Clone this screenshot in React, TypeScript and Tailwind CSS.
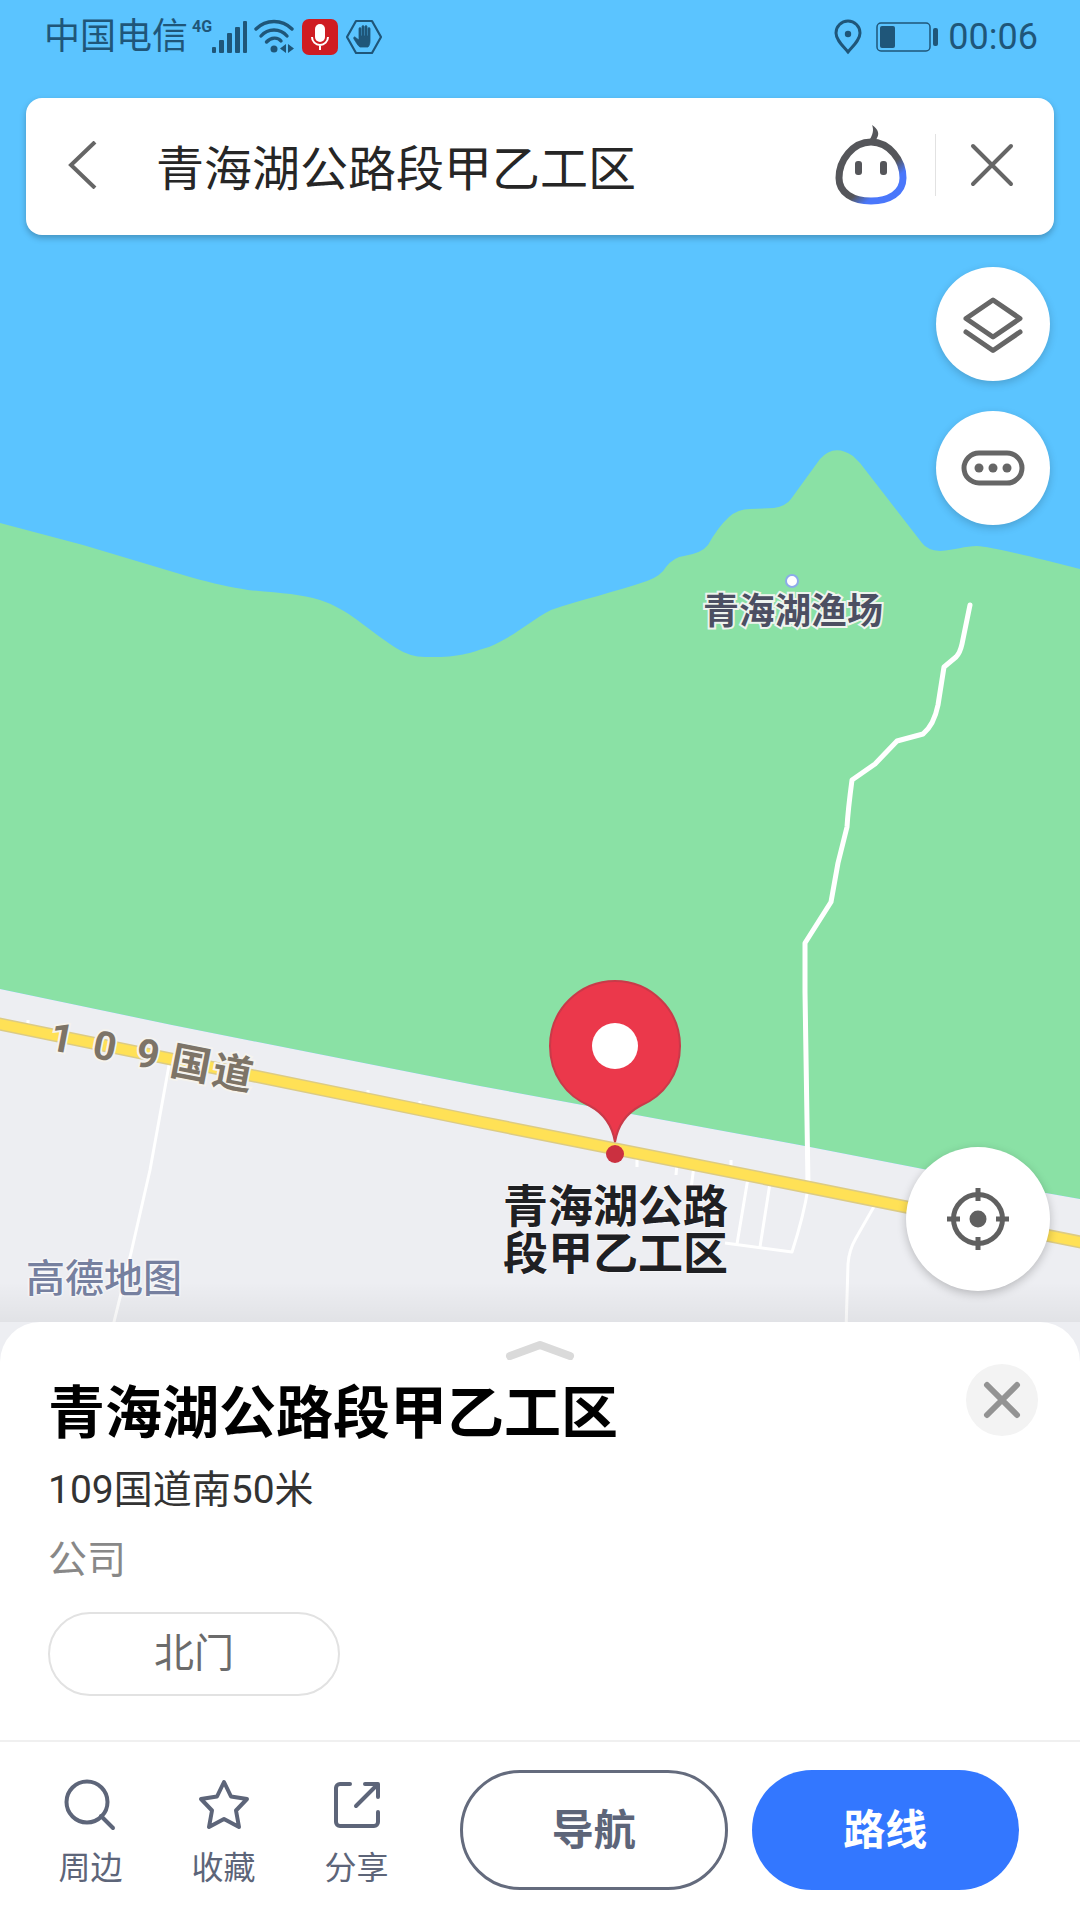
import React, { useState } from 'react';

const PLACE_NAME = '青海湖公路段甲乙工区';

const roadLabel = [
  { char: '1', x: 62, y: 1037 },
  { char: '0', x: 105, y: 1045 },
  { char: '9', x: 148, y: 1053 },
  { char: '国', x: 191, y: 1063 },
  { char: '道', x: 233, y: 1072 }
];

const StatusBar: React.FC = () => (
  <div className="relative flex h-[74px] items-center justify-between pr-[42px] pl-11 text-4xl text-[#1f5679]">
    <div className="flex items-center">
      <span>中国电信</span>
      <span className="ml-1 self-start text-base leading-5 font-bold">4G</span>
      <svg className="h-9 w-9" viewBox="0 0 36 36" fill="currentColor" aria-hidden="true">
        <rect x="0" y="28" width="4" height="6" rx="1" />
        <rect x="7" y="21" width="5" height="13" rx="1" />
        <rect x="15" y="14" width="5" height="20" rx="1" />
        <rect x="23" y="8" width="5" height="26" rx="1" />
        <rect x="31" y="2" width="4" height="32" rx="1" />
      </svg>
      <svg className="ml-1.5 h-9 w-10" viewBox="0 0 40 36" fill="none" stroke="currentColor" strokeWidth="3.4" strokeLinecap="round" aria-hidden="true">
        <path d="M2 10C12 0 28 0 38 10" />
        <path d="M7 17C14 9 26 9 33 17" />
        <path d="M12.500 23C17 18 24 18 27 22" />
        <circle cx="20" cy="30" r="3.500" fill="currentColor" stroke="none" />
        <path d="M32 25v9l-6-4.500zM34 25v9l6-4.500z" fill="currentColor" stroke="none" />
      </svg>
      <svg className="ml-2 h-9 w-9" viewBox="0 0 36 36" aria-hidden="true">
        <rect width="36" height="36" rx="7" fill="#cf1c22" />
        <rect x="13" y="5" width="10" height="18" rx="5" fill="#fff" />
        <path d="M10 18a8 8 0 0 0 16 0M18 26v5" fill="none" stroke="#fff" strokeWidth="2" />
      </svg>
      <svg className="ml-2 h-9 w-9" viewBox="0 0 36 36" aria-hidden="true">
        <path d="M10 2h16l9 16-9 16H10L1 18z" fill="none" stroke="currentColor" strokeWidth="2.200" strokeLinejoin="round" />
        <path
          d="M14 28c-2-1-4-5-6-8-1-2 1-3 2-1l3 2V10c0-2 2-2 2 0v7h1V8c0-2 2-2 2 0v9h1V8c0-2 2-2 2 0v9h1v-7c0-2 2-2 2 0v12c0 3-1 5-2 6z"
          fill="currentColor"
          stroke="currentColor"
          strokeWidth="0.800"
        />
      </svg>
    </div>
    <div className="flex items-center">
      <svg className="h-9 w-7" viewBox="0 0 28 36" fill="none" stroke="currentColor" strokeWidth="3" aria-hidden="true">
        <path d="M14 33C9 27 2 21 2 14a12 12 0 0 1 24 0c0 7-7 13-12 19z" />
        <circle cx="14" cy="15" r="3.200" fill="currentColor" stroke="none" />
      </svg>
      <svg className="ml-3.5 h-8 w-16" viewBox="0 0 64 32" aria-hidden="true">
        <rect x="1" y="2" width="53" height="28" rx="4" fill="none" stroke="currentColor" strokeWidth="1.500" />
        <rect x="4" y="5" width="15" height="22" rx="2" fill="currentColor" />
        <rect x="57" y="7" width="5" height="18" rx="2" fill="currentColor" />
      </svg>
      <time className="ml-2">00:06</time>
    </div>
  </div>
);

const MapCanvas: React.FC = () => (
  <svg
    className="absolute inset-0 h-full w-full"
    viewBox="0 0 1080 1362"
    preserveAspectRatio="xMidYMin slice"
    role="img"
    aria-label="地图"
  >
    <defs>
      <linearGradient id="sheetShade" x1="0" y1="0" x2="0" y2="1">
        <stop offset="0" stopColor="#000" stopOpacity="0" />
        <stop offset="1" stopColor="#000" stopOpacity="0.050" />
      </linearGradient>
    </defs>
    <rect width="1080" height="1362" fill="#5bc4ff" />
    {/* shore */}
    <path
      d="M0 523L83 545L190 577C215 584 230 587 248 590C280 593 300 594 320 600C350 610 365 628 396 648Q410 657 425 657L441 657C465 656 475 651 489 647C515 636 530 621 551 610C580 600 615 592 647 581Q661 576 666 567Q674 557 684 556Q702 553 708 545Q718 527 729 517Q738 509 750 509L774 508Q786 506 791 499L820 459Q834 443 853 456L860 463L922 543Q927 550 940 551C955 550 965 546 977 546Q995 547 1080 569V1199L1046 1193L805 1146L480 1086L172 1025L0 989Z"
      fill="#8ae1a5"
    />
    <path d="M0 989L172 1025L480 1086L805 1146L1046 1193L1080 1199V1362H0Z" fill="#edeef2" />

    {/* minor roads */}
    <g fill="none" stroke="#fff" strokeLinejoin="round">
      <g strokeWidth="3">
        <path d="M170 1060L150 1170L131 1253L112 1330" />
        <path d="M637 1155v12M677 1163l-1 12M694 1166l-4 30M731 1160v10" />
        <path d="M748 1178L737 1244M770 1183L760 1247M808 1188Q804 1215 792 1252L725 1243" />
        <path d="M876 1203L856 1238Q849 1250 848 1264L846 1330" />
        <path d="M28 1020v10M368 1090v8M420 1101v8" />
      </g>
      <path
        d="M970 605L962 644Q960 653 956 657L944 667L938 705Q934 725 923 734L897 741L875 764L852 780Q848 810 847 827L838 863L831 902L805 943V992L808 1184"
        strokeWidth="5"
        strokeLinecap="round"
      />
    </g>

    {/* national road 109 */}
    <path d="M-10 1022L480 1122L807 1187L1090 1244" fill="none" stroke="#dccb84" strokeWidth="13" />
    <path d="M-10 1022L480 1122L807 1187L1090 1244" fill="none" stroke="#ffe156" strokeWidth="10" />
    <g className="text-[40px] font-bold" fill="#7d7467" stroke="#f5f3ee" strokeWidth="4" paintOrder="stroke" textAnchor="middle">
      {roadLabel.map(({ char, x, y }) => (
        <text key={char} transform={`translate(${x} ${y}) rotate(11)`} y="15">
          {char}
        </text>
      ))}
    </g>

    <circle cx="792" cy="581" r="6" fill="#fff" stroke="#8cabea" strokeWidth="2" />
    <text className="text-4xl font-bold" x="793" y="624" textAnchor="middle" fill="#4c4f62" stroke="#eef3ee" strokeWidth="4" paintOrder="stroke">
      青海湖渔场
    </text>

    {/* selected place */}
    <path
      d="M615 1142C612 1124 603 1113 590 1106C566 1096 550 1074 550 1046A65 65 0 0 1 680 1046C680 1074 664 1096 640 1106C627 1113 618 1124 615 1142Z"
      fill="#eb384b"
      stroke="#c93a49"
      strokeWidth="2"
    />
    <circle cx="615" cy="1046" r="23" fill="#fff" />
    <circle cx="615" cy="1154" r="9" fill="#cb3040" />
    <foreignObject x="503" y="1184" width="228" height="100">
      <p className="text-[45px] leading-[47px] font-bold text-[#1f2023] [text-shadow:0_0_2px_#fff,0_0_2px_#fff]">{PLACE_NAME}</p>
    </foreignObject>
    <rect y="1282" width="1080" height="40" fill="url(#sheetShade)" />
  </svg>
);

const SearchBar: React.FC = () => {
  const [keyword, setKeyword] = useState(PLACE_NAME);

  return (
    <form className="relative mx-[26px] mt-6 flex h-[137px] items-center rounded-2xl bg-white pr-10 pb-1 pl-10 shadow-[0_3px_6px_rgba(0,0,0,0.25)]">
      <button type="button" aria-label="返回" className="text-[#666]">
        <svg className="h-12 w-8" viewBox="0 0 32 48" fill="none" stroke="currentColor" strokeWidth="4">
          <path d="M29 1L5 24l24 23" />
        </svg>
      </button>
      <input
        aria-label="搜索地点"
        className="ml-[58px] h-16 min-w-0 flex-1 text-5xl text-[#262626] outline-none"
        value={keyword}
        onChange={(e) => setKeyword(e.target.value)}
      />
      <button type="button" aria-label="语音助手">
        <svg className="h-20 w-[72px]" viewBox="0 0 72 80" fill="none">
          <defs>
            <linearGradient id="faceRing" x1="18" y1="40" x2="46" y2="74" gradientUnits="userSpaceOnUse">
              <stop offset="0.550" stopColor="#55565a" />
              <stop offset="0.850" stopColor="#4a77fb" />
            </linearGradient>
          </defs>
          <path d="M36 17C54 17 68 35 68 53C68 68 54 76 36 76C18 76 4 68 4 53C4 35 18 17 36 17Z" stroke="url(#faceRing)" strokeWidth="7" />
          <path d="M37 0C43 4 46 9 40 16H34C38 9 39 5 37 0Z" fill="#55565a" />
          <rect x="20" y="36" width="7" height="14" rx="3" fill="#55565a" />
          <rect x="45" y="36" width="7" height="14" rx="3" fill="#55565a" />
        </svg>
      </button>
      <span className="ml-7 h-[62px] w-px bg-[#e2e2e2]" />
      <button type="button" aria-label="清除" className="ml-[34px] text-[#666]" onClick={() => setKeyword('')}>
        <svg className="h-11 w-11" viewBox="0 0 44 44" fill="none" stroke="currentColor" strokeWidth="4" strokeLinecap="round">
          <path d="M3 3l38 38M41 3L3 41" />
        </svg>
      </button>
    </form>
  );
};

const MapControls: React.FC = () => (
  <div className="relative mt-8 mr-[30px] flex flex-col gap-[30px] self-end text-[#666]">
    <button type="button" aria-label="图层" className="flex size-[114px] items-center justify-center rounded-full bg-white shadow-[0_3px_8px_rgba(0,0,0,0.18)]">
      <svg className="size-16" viewBox="0 0 64 64" fill="none" stroke="currentColor" strokeWidth="5" strokeLinejoin="round" strokeLinecap="round">
        <path d="M32 8L59 26.500 32 45 5 26.500z" />
        <path d="M5 40l27 18.500L59 40" />
      </svg>
    </button>
    <button type="button" aria-label="更多" className="flex size-[114px] items-center justify-center rounded-full bg-white shadow-[0_3px_8px_rgba(0,0,0,0.18)]">
      <svg className="size-16" viewBox="0 0 64 64">
        <rect x="3" y="17" width="58" height="30" rx="15" fill="none" stroke="currentColor" strokeWidth="5" />
        <circle cx="18" cy="32" r="4.500" fill="currentColor" />
        <circle cx="32" cy="32" r="4.500" fill="currentColor" />
        <circle cx="46" cy="32" r="4.500" fill="currentColor" />
      </svg>
    </button>
  </div>
);

const actions = [
  {
    label: '周边',
    icon: (
      <>
        <circle cx="24" cy="26" r="20.500" />
        <path d="M38 40l12 12" />
      </>
    )
  },
  {
    label: '收藏',
    icon: <path d="M28 6l7 14.500 16 2.500-11 11.500 3 16.500-15-8-15 8 3-16.500-11-11.500 16-2.500z" />
  },
  {
    label: '分享',
    icon: (
      <>
        <path d="M21 8H11a4 4 0 0 0-4 4v34a4 4 0 0 0 4 4h34a4 4 0 0 0 4-4V36" />
        <path d="M36 8h13v13M48 9L27 30" />
      </>
    )
  }
];

const PlaceSheet: React.FC = () => (
  <section className="relative -mt-10 rounded-t-[40px] bg-white">
    <div className="px-12 pt-4">
      <button type="button" aria-label="展开" className="mx-auto block">
        <svg className="h-6 w-[72px]" viewBox="0 0 72 24" fill="none" stroke="#dadada" strokeWidth="8" strokeLinecap="round" strokeLinejoin="round">
          <path d="M6 18L36 7l30 11" />
        </svg>
      </button>
      <div className="-mr-1.5 flex items-start justify-between">
        <h1 className="mt-2.5 text-[57px] leading-[84px] font-bold text-black">{PLACE_NAME}</h1>
        <button type="button" aria-label="关闭" className="mt-0.5 flex size-[72px] items-center justify-center rounded-full bg-[#f3f3f3]">
          <svg className="size-10" viewBox="0 0 40 40" fill="none" stroke="#939393" strokeWidth="6" strokeLinecap="round">
            <path d="M5 5l30 30M35 5L5 35" />
          </svg>
        </button>
      </div>
      <p className="mt-1.5 text-[39px] leading-[56px] text-[#333]">109国道南50米</p>
      <p className="mt-3.5 text-[39px] leading-[56px] text-[#888]">公司</p>
      <button type="button" className="mt-6 block h-[84px] w-[292px] rounded-full border-2 border-[#e2e2e2] text-[40px] text-[#6b6b6b]">
        北门
      </button>
    </div>
    <nav className="mt-11 flex items-start border-t-2 border-[#f0f0f0] px-6 pt-7 pb-7 text-[#5d6579]">
      {actions.map(({ label, icon }) => (
        <button key={label} type="button" className="flex w-[133px] flex-col items-center gap-3 pt-1.5">
          <svg className="size-14" viewBox="0 0 56 56" fill="none" stroke="currentColor" strokeWidth="4" strokeLinecap="round" strokeLinejoin="round">
            {icon}
          </svg>
          <span className="text-[32px] leading-[48px]">{label}</span>
        </button>
      ))}
      <div className="mx-[37px] grid flex-1 grid-cols-2 gap-6 text-[42px] font-bold">
        <button type="button" className="h-[120px] rounded-full border-3 border-[#646b7d]">
          导航
        </button>
        <button type="button" className="h-[120px] rounded-full bg-[#3377ff] text-white">
          路线
        </button>
      </div>
    </nav>
  </section>
);

export default function App() {
  return (
    <div className="flex min-h-screen flex-col bg-white font-[Roboto,'Noto_Sans_CJK_SC',sans-serif]">
      <main className="relative flex flex-1 flex-col">
        <MapCanvas />
        <StatusBar />
        <SearchBar />
        <MapControls />
        <div className="relative mt-auto flex items-end justify-between pr-[30px] pb-[71px] pl-[26px]">
          <span className="-mb-2 text-[39px] leading-[40px] font-medium text-[#76809f] [text-shadow:0_0_3px_#fff,0_0_3px_#fff]">高德地图</span>
          <button type="button" aria-label="定位" className="flex size-36 items-center justify-center rounded-full bg-white text-[#606060] shadow-[0_3px_10px_rgba(0,0,0,0.22)]">
            <svg className="size-16" viewBox="0 0 64 64" fill="none" stroke="currentColor" strokeWidth="5">
              <circle cx="32" cy="32" r="24.500" />
              <circle cx="32" cy="32" r="8.500" fill="currentColor" stroke="none" />
              <path d="M32 1v13M32 50v13M1 32h13M50 32h13" />
            </svg>
          </button>
        </div>
      </main>
      <PlaceSheet />
    </div>
  );
}
